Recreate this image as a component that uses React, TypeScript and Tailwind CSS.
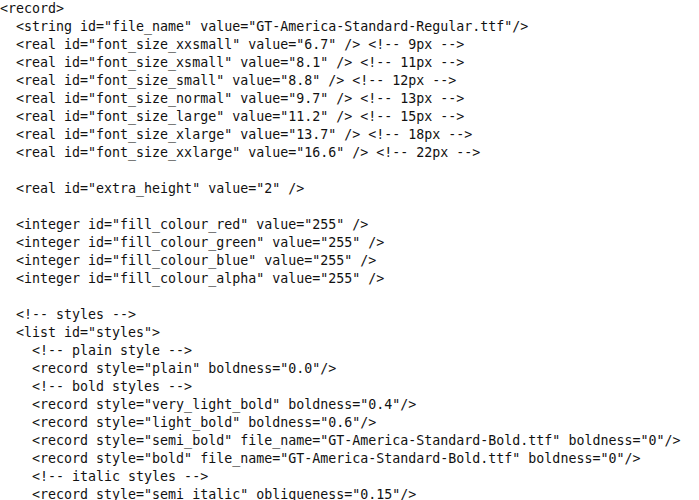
import React from "react";

const lines: string[] = [
  "<record>",
  '  <string id="file_name" value="GT-America-Standard-Regular.ttf"/>',
  '  <real id="font_size_xxsmall" value="6.7" /> <!-- 9px -->',
  '  <real id="font_size_xsmall" value="8.1" /> <!-- 11px -->',
  '  <real id="font_size_small" value="8.8" /> <!-- 12px -->',
  '  <real id="font_size_normal" value="9.7" /> <!-- 13px -->',
  '  <real id="font_size_large" value="11.2" /> <!-- 15px -->',
  '  <real id="font_size_xlarge" value="13.7" /> <!-- 18px -->',
  '  <real id="font_size_xxlarge" value="16.6" /> <!-- 22px -->',
  "",
  '  <real id="extra_height" value="2" />',
  "",
  '  <integer id="fill_colour_red" value="255" />',
  '  <integer id="fill_colour_green" value="255" />',
  '  <integer id="fill_colour_blue" value="255" />',
  '  <integer id="fill_colour_alpha" value="255" />',
  "",
  "  <!-- styles -->",
  '  <list id="styles">',
  "    <!-- plain style -->",
  '    <record style="plain" boldness="0.0"/>',
  "    <!-- bold styles -->",
  '    <record style="very_light_bold" boldness="0.4"/>',
  '    <record style="light_bold" boldness="0.6"/>',
  '    <record style="semi_bold" file_name="GT-America-Standard-Bold.ttf" boldness="0"/>',
  '    <record style="bold" file_name="GT-America-Standard-Bold.ttf" boldness="0"/>',
  "    <!-- italic styles -->",
  '    <record style="semi_italic" obliqueness="0.15"/>',
];

const App: React.FC = () => {
  return (
    <div className="w-[699px] h-[500px] overflow-hidden bg-white">
      <pre className="m-0 font-['DejaVu_Sans_Mono',monospace] text-[13.3px] leading-[18px] text-[#111]">
        {lines.map((line, i) => (
          <div key={i} className="h-[18px] whitespace-pre">
            {line}
          </div>
        ))}
      </pre>
    </div>
  );
};

export default App;
